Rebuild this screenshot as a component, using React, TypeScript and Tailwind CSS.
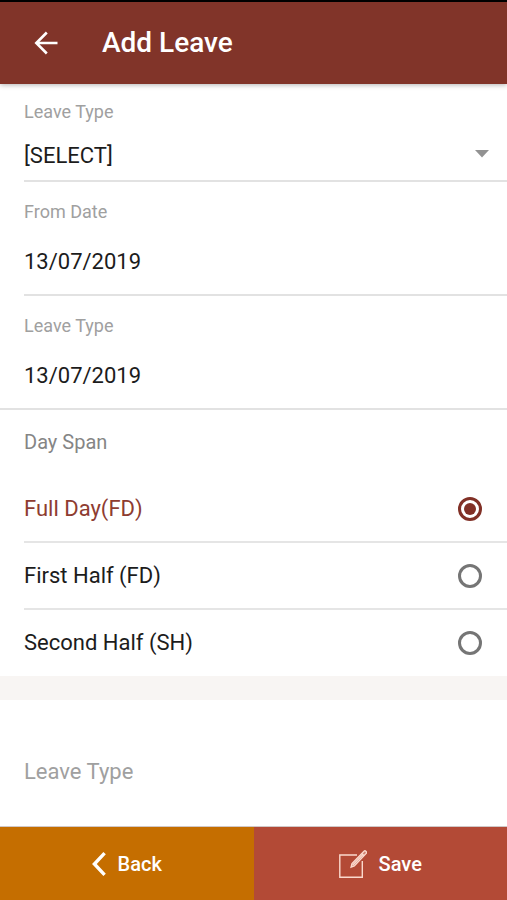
import { useState } from "react";

const daySpans = [
  { value: "full", label: "Full Day(FD)" },
  { value: "first", label: "First Half (FD)" },
  { value: "second", label: "Second Half (SH)" },
];

function BackArrow() {
  return (
    <svg className="h-6 w-6" viewBox="0 0 24 24" fill="none" stroke="currentColor" strokeWidth="2.6" aria-hidden="true">
      <path d="M23.5 12H2.5M12.8 1.5L2.3 12l10.5 10.5" />
    </svg>
  );
}

function ChevronLeft() {
  return (
    <svg className="h-6 w-3.5" viewBox="0 0 14 24" fill="none" stroke="currentColor" strokeWidth="3.4" aria-hidden="true">
      <path d="M12.6 1.2L2.4 12l10.2 10.8" />
    </svg>
  );
}

function ComposeIcon() {
  return (
    <svg className="h-7 w-7" viewBox="0 0 28 28" fill="none" stroke="currentColor" strokeWidth="1.4" aria-hidden="true">
      <path d="M18 5H.8v22.3h22.5V11" />
      <path d="M12.1 17.1l.9-3.5L25 1.2q1-.8 2 .2t.2 2L15.3 15.9z" fill="currentColor" fillOpacity="0.4" />
      <path d="M22.8 3.5l2.3 2.200M13.6 15.3L24 4.6" />
    </svg>
  );
}

function DateField({ id, label }: { id: string; label: string }) {
  return (
    <div className="flex flex-col pt-[18px] pb-4">
      <label htmlFor={id} className="text-lg leading-6 text-[#a0a0a0]">{label}</label>
      <input
        id={id}
        type="text"
        defaultValue="13/07/2019"
        className="mt-[22px] h-8 w-full bg-transparent text-[22px] leading-8 text-[#1c1c1c] outline-none"
      />
    </div>
  );
}

export default function App() {
  const [span, setSpan] = useState("full");

  return (
    <div className="flex min-h-screen flex-col bg-white font-[Roboto,sans-serif] text-[#1c1c1c]">
      <header className="z-10 flex h-21 items-center gap-11 border-t-2 border-black bg-[#813429] px-[34px] text-white shadow-[0_1px_5px_rgba(0,0,0,0.3)]">
        <button type="button" aria-label="Go back"><BackArrow /></button>
        <h1 className="text-[28px] leading-9 font-medium">Add Leave</h1>
      </header>

      <main className="flex grow flex-col">
        <div className="ml-6 border-b-2 border-[#e2e2e2] pt-4 pb-1.5">
          <label htmlFor="leave-type" className="block text-lg leading-6 text-[#a0a0a0]">Leave Type</label>
          <div className="relative mt-3.5">
            <select
              id="leave-type"
              className="h-9 w-full appearance-none bg-transparent text-[22px] leading-9 outline-none"
            >
              <option>[SELECT]</option>
            </select>
            <svg className="pointer-events-none absolute top-3 right-[18px] h-2 w-3.5" viewBox="0 0 14 8" aria-hidden="true">
              <path d="M0 0h14L7 7.5z" fill="#929292" />
            </svg>
          </div>
        </div>
        <div className="ml-6 border-b-2 border-[#e2e2e2]">
          <DateField id="from-date" label="From Date" />
        </div>
        <div className="border-b-2 border-[#e2e2e2] pl-6">
          <DateField id="to-date" label="Leave Type" />
        </div>

        <fieldset className="flex flex-col">
          <legend className="px-6 pt-[18px] pb-5 text-xl leading-7 text-[#858585]">Day Span</legend>
          {daySpans.map((item) => (
            <label
              key={item.value}
              className="ml-6 flex h-[67px] items-center justify-between border-b-2 border-[#e5e5e5] pr-[25px] text-[22px] leading-8 last:h-[66px] last:border-b-0 has-checked:text-[#8e3c31]"
            >
              {item.label}
              <input
                type="radio"
                name="day-span"
                value={item.value}
                checked={span === item.value}
                onChange={() => setSpan(item.value)}
                className="grid size-6 appearance-none place-items-center rounded-full border-3 border-[#757575] before:size-3 before:rounded-full checked:border-[#813026] checked:before:bg-[#813026]"
              />
            </label>
          ))}
        </fieldset>

        <div className="h-6 bg-[#f8f5f3]" />

        <div className="flex items-center gap-4 px-6 pt-14 pb-8 text-[22px] leading-8">
          <label htmlFor="reason" className="shrink-0 text-[#a0a0a0]">Leave Type</label>
          <input id="reason" type="text" className="h-8 min-w-0 grow bg-transparent outline-none" />
        </div>
      </main>

      <footer className="grid h-[74px] grid-cols-2 border-t border-[#d0c8c8] text-xl leading-7 font-medium text-white">
        <button type="button" className="flex items-center justify-center gap-3 bg-[#c56e00]">
          <ChevronLeft />
          Back
        </button>
        <button type="button" className="flex items-center justify-center gap-3 bg-[#b34a36]">
          <span className="text-[#fbd9cd]"><ComposeIcon /></span>
          Save
        </button>
      </footer>
    </div>
  );
}
